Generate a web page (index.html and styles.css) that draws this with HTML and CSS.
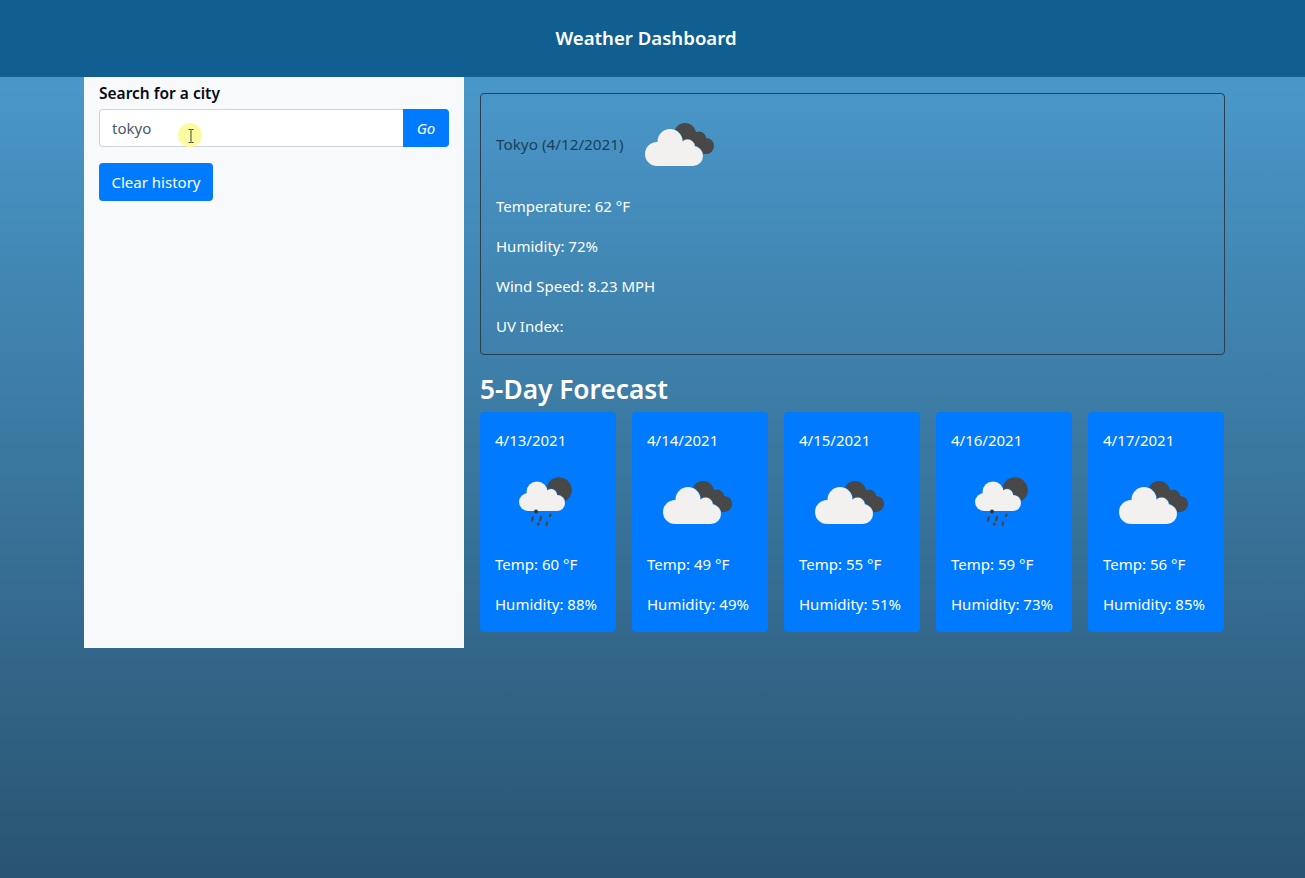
FILE: index.html
```html
<!DOCTYPE html>
<html lang="en">
<head>
    <meta charset="UTF-8">
    <meta name="viewport" content="width=device-width, initial-scale=1.0">
    <title>Weather Dashboard</title>
    <link rel="stylesheet" href="styles.css">
</head>
<body>
    <!-- shared weather icons, 100x100 like the api images -->
    <svg class="icon-defs" aria-hidden="true">
        <symbol id="icon-clouds" viewBox="0 0 100 100">
            <g fill="#484848">
                <circle cx="55" cy="40" r="11"/>
                <circle cx="69" cy="44.500" r="7"/>
                <circle cx="76" cy="52" r="8"/>
                <rect x="50" y="42" width="26" height="18"/>
            </g>
            <!-- thin gap between the clouds, takes the colour behind the icon -->
            <g fill="currentColor" stroke="currentColor" stroke-width="1">
                <circle cx="40" cy="47.500" r="12.500"/>
                <circle cx="57.500" cy="53" r="7.500"/>
                <circle cx="63" cy="62" r="10"/>
            </g>
            <g fill="#f2f1f0">
                <circle cx="27" cy="60" r="12"/>
                <circle cx="40" cy="47.500" r="12.500"/>
                <circle cx="57.500" cy="53" r="7.500"/>
                <circle cx="63" cy="62" r="10"/>
                <rect x="27" y="49" width="36" height="23"/>
            </g>
        </symbol>
        <symbol id="icon-rain" viewBox="0 0 100 100">
            <circle cx="63" cy="38" r="12.800" fill="#484848"/>
            <g fill="currentColor" stroke="currentColor" stroke-width="1">
                <circle cx="41" cy="40" r="10.500"/>
                <circle cx="55" cy="43" r="6"/>
                <circle cx="61" cy="51" r="8"/>
            </g>
            <g fill="#f2f1f0">
                <circle cx="32" cy="50" r="9"/>
                <circle cx="41" cy="40" r="10.500"/>
                <circle cx="55" cy="43" r="6"/>
                <circle cx="61" cy="51" r="8"/>
                <rect x="32" y="42" width="29" height="17"/>
            </g>
            <circle cx="40" cy="59.500" r="2" fill="#333"/>
            <g stroke="#484848" stroke-width="2.600" stroke-linecap="round">
                <path d="M36.800 65.500l-.8 3"/>
                <path d="M45 65l-.8 3"/>
                <path d="M54.500 62.800l-.6 1"/>
                <path d="M42.500 71.500l-.4 1"/>
                <path d="M51 70.800l-.6 2"/>
            </g>
        </symbol>
    </svg>

    <header class="page-header">
        <h1>Weather Dashboard</h1>
    </header>

    <div class="container">
        <aside class="sidebar">
            <label class="search-label" for="city-input">Search for a city</label>
            <div class="input-group">
                <input type="text" id="city-input" value="tokyo">
                <button class="btn btn-go">Go</button>
            </div>
            <button class="btn btn-clear">Clear history</button>
        </aside>

        <main class="results">
            <section class="current-weather">
                <div class="current-title">
                    <span class="city-name">Tokyo (4/12/2021)</span>
                    <svg class="weather-icon"><use href="#icon-clouds"></use></svg>
                </div>
                <p>Temperature: 62 °F</p>
                <p>Humidity: 72%</p>
                <p>Wind Speed: 8.23 MPH</p>
                <p>UV Index:</p>
            </section>

            <h3 class="forecast-title">5-Day Forecast</h3>
            <div class="forecast-row">
                <div class="forecast-card">
                    <div class="forecast-date">4/13/2021</div>
                    <svg class="weather-icon"><use href="#icon-rain"></use></svg>
                    <p>Temp: 60 °F</p>
                    <p>Humidity: 88%</p>
                </div>
                <div class="forecast-card">
                    <div class="forecast-date">4/14/2021</div>
                    <svg class="weather-icon"><use href="#icon-clouds"></use></svg>
                    <p>Temp: 49 °F</p>
                    <p>Humidity: 49%</p>
                </div>
                <div class="forecast-card">
                    <div class="forecast-date">4/15/2021</div>
                    <svg class="weather-icon"><use href="#icon-clouds"></use></svg>
                    <p>Temp: 55 °F</p>
                    <p>Humidity: 51%</p>
                </div>
                <div class="forecast-card">
                    <div class="forecast-date">4/16/2021</div>
                    <svg class="weather-icon"><use href="#icon-rain"></use></svg>
                    <p>Temp: 59 °F</p>
                    <p>Humidity: 73%</p>
                </div>
                <div class="forecast-card">
                    <div class="forecast-date">4/17/2021</div>
                    <svg class="weather-icon"><use href="#icon-clouds"></use></svg>
                    <p>Temp: 56 °F</p>
                    <p>Humidity: 85%</p>
                </div>
            </div>
        </main>
    </div>

    <!-- screen recorder's cursor highlight -->
    <div class="cursor-mark">
        <svg width="10" height="16" viewBox="0 0 10 16">
            <path d="M2.500 1.500h2l.5.500.5-.500h2M5 2v12M2.500 14.500h2l.5-.500.5.500h2" fill="none" stroke="#444" stroke-width="1"/>
        </svg>
    </div>
</body>
</html>
```

FILE: styles.css
```css
* {
    box-sizing: border-box;
}
html, body {
    height: 100%;
}
body {
    margin: 0;
    font-family: 'Noto Sans', 'Open Sans', sans-serif;
    font-size: 15px;
    line-height: 24px;
    color: #fff;
    background: linear-gradient(180deg, #4c9ed2 0%, #2a5471 100%);
    overflow: hidden;
}
p {
    margin: 0 0 16px;
}
.icon-defs {
    display: none;
}
.page-header {
    height: 77px;
    padding: 0 13px 2px 0;
    display: flex;
    align-items: center;
    justify-content: center;
    background-color: #105f90;
}
.page-header h1 {
    margin: 0;
    font-size: 18.600px;
    font-weight: 600;
}
.container {
    width: 1140px;
    margin-left: 84px;
    display: flex;
    align-items: flex-start;
}
.sidebar {
    width: 380px;
    height: 571px;
    padding: 4px 15px;
    background-color: #f8f9fa;
    color: #050a14;
}
.search-label {
    display: block;
    font-size: 15.500px;
    font-weight: 600;
    margin-bottom: 4px;
}
.input-group {
    display: flex;
    height: 38px;
    margin-bottom: 16px;
}
.input-group input {
    flex-grow: 1;
    min-width: 0;
    padding: 6px 12px;
    border: 1px solid #ced4da;
    border-right: none;
    border-radius: 4px 0 0 4px;
    font-family: inherit;
    font-size: 15px;
    color: #465a68;
    outline: none;
}
.btn {
    height: 38px;
    padding: 0 12.500px;
    border: none;
    border-radius: 4px;
    background-color: #007bff;
    color: #fff;
    font-family: inherit;
    font-size: 15px;
}
.btn-go {
    width: 46px;
    padding: 0;
    border-radius: 0 4px 4px 0;
    font-style: italic;
}
.results {
    width: 760px;
    padding: 16px 0 0 16px;
}
.current-weather {
    height: 262px;
    width: 745px;
    padding: 0 15px;
    border: 1px solid #2a4050;
    border-radius: 4px;
}
.current-title {
    display: flex;
    align-items: center;
    height: 100px;
    gap: 6px;
    color: #1d3f5c;
    font-size: 15.300px;
}
.current-weather .weather-icon {
    color: #4795c6;
}
.weather-icon {
    display: block;
    width: 100px;
    height: 100px;
    flex-shrink: 0;
}
.forecast-title {
    margin: 16px 0 0;
    height: 41px;
    font-size: 26.250px;
    line-height: 37px;
    font-weight: 600;
}
.forecast-row {
    display: flex;
    gap: 16px;
}
.forecast-card {
    width: 136px;
    height: 220px;
    padding: 16px 15px 0;
    background-color: #007bff;
    border-radius: 4px;
}
.forecast-card .weather-icon {
    margin-left: 1px;
    color: #007bff;
}
.cursor-mark {
    position: absolute;
    left: 178px;
    top: 123px;
    width: 24px;
    height: 24px;
    padding: 2px 0 0 2px;
    border-radius: 50%;
    background-color: #fdfb9f;
    display: flex;
    align-items: center;
    justify-content: center;
}
```
